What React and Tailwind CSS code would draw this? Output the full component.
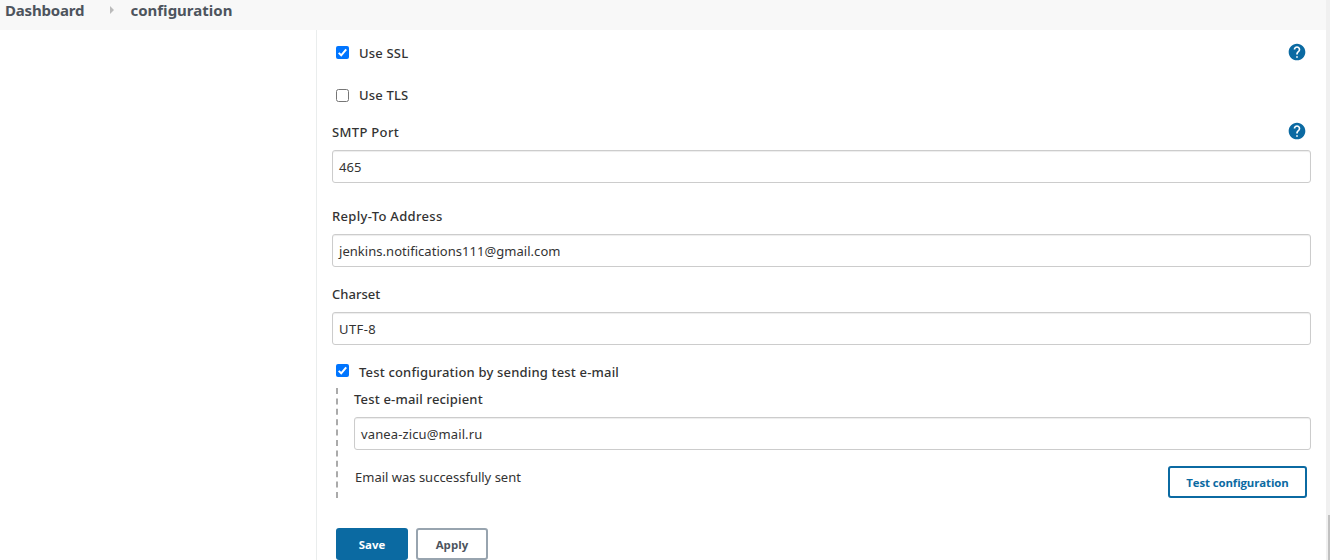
import React from "react";

const label = "text-[13px] leading-5 font-medium text-[#333] whitespace-nowrap tracking-[0.18px]";

function Check({ checked }) {
  return (
    <span
      role="checkbox"
      aria-checked={checked}
      className={
        checked
          ? "block size-[13px] shrink-0 rounded-[2px] bg-[#0075ff]"
          : "block size-[13px] shrink-0 rounded-[2.5px] border border-[#767676] bg-white"
      }
    >
      {checked && (
        <svg viewBox="0 0 13 13" className="block size-[13px]">
          <path d="M2.7 6.9 L5.2 9.3 L10.2 3.3" fill="none" stroke="#fff" strokeWidth="2" />
        </svg>
      )}
    </span>
  );
}

function Help() {
  return (
    <svg viewBox="0 0 24 24" className="block size-5 shrink-0">
      <path
        fill="#0b6aa2"
        d="M12 2C6.48 2 2 6.48 2 12s4.48 10 10 10 10-4.48 10-10S17.52 2 12 2zm1 17h-2v-2h2v2zm2.07-7.75l-.9.92C13.45 12.9 13 13.5 13 15h-2v-.5c0-1.1.45-2.1 1.17-2.83l1.24-1.26c.37-.36.59-.86.59-1.41 0-1.1-.9-2-2-2s-2 .9-2 2H8c0-2.21 1.79-4 4-4s4 1.79 4 4c0 .88-.36 1.68-.93 2.25z"
      />
    </svg>
  );
}

function Field({ children }) {
  return (
    <div className="flex h-[33px] items-center rounded-[3px] border border-[#ccc] bg-white px-1.5 pt-px text-[13px] leading-5 tracking-[0.04px] text-[#333] shadow-[inset_0_1px_1px_rgba(0,0,0,0.075)]">
      {children}
    </div>
  );
}

export default function App() {
  return (
    <div className="flex h-[560px] w-[1330px] overflow-hidden bg-white font-['Noto_Sans','Open_Sans',sans-serif]">
      <div className="flex w-[1326px] flex-col">
        <header className="flex h-[30px] shrink-0 items-start bg-[#f8f8f8] pl-[5px] text-[15px] leading-5 font-bold text-[#4d545d]">
          <span className="w-[105px] tracking-[-0.2px]">Dashboard</span>
          <svg viewBox="0 0 4 8" className="mt-[6px] mr-[16.5px] block h-2 w-1">
            <path d="M0 0 L4 4 L0 8Z" fill="#bbb" />
          </svg>
          <span>configuration</span>
        </header>
        <div className="flex flex-1">
          <aside className="w-[317px] shrink-0 border-r border-[#eaeded]" />
          <main className="flex w-[994px] shrink-0 flex-col pl-[15px]">
            <div className="flex h-11 items-center gap-2.5 pr-1 pl-1">
              <Check checked />
              <span className={label + " flex-1 pt-0.5"}>Use SSL</span>
              <Help />
            </div>
            <div className="flex h-[42px] items-center gap-2.5 pl-1">
              <Check />
              <span className={label}>Use TLS</span>
            </div>
            <div className="flex h-[34px] items-start justify-between pt-[5px] pr-1">
              <span className={label + " pt-px"}><span className="tracking-[0.33px]">SMTP Port</span></span>
              <Help />
            </div>
            <Field><span>465</span></Field>
            <div className="h-[51px] pt-[23px]">
              <div className={label}><span className="tracking-[0.32px]">Reply-To Address</span></div>
            </div>
            <Field><span>jenkins.notifications111@gmail.com</span></Field>
            <div className="h-[45px] pt-[17px]">
              <div className={label}><span className="tracking-[0.02px]">Charset</span></div>
            </div>
            <Field><span className="tracking-[0.4px]">UTF-8</span></Field>
            <div className="flex h-[43px] items-start gap-2.5 pt-[17px] pl-1">
              <div className="pt-[2px]"><Check checked /></div>
              <span className={label}>Test configuration by sending test e-mail</span>
            </div>
            <div className="ml-1 h-[110px] border-l-2 border-dashed border-[#aaa] pl-4">
              <div className="h-[29px] pt-px">
                <div className={label}>Test e-mail recipient</div>
              </div>
              <Field><span className="tracking-[0.12px]">vanea-zicu@mail.ru</span></Field>
              <div className="flex justify-between pt-4 pr-1 pl-px">
                <span className="pt-px text-[13px] leading-5 text-[#333]">Email was successfully sent</span>
                <button className="h-8 w-[139px] rounded-[3px] border-2 border-[#0b6aa2] bg-white pt-0.5 font-['Open_Sans','Noto_Sans',sans-serif] text-[11.4px] font-bold tracking-[-0.1px] text-[#0b6aa2]">
                  <span>Test configuration</span>
                </button>
              </div>
            </div>
            <div className="mt-[30px] flex gap-2 pl-1 font-['Open_Sans','Noto_Sans',sans-serif] text-[11.4px] font-bold">
              <button className="h-8 w-[72px] rounded-[3px] bg-[#0b6aa2] pt-0.5 text-white"><span>Save</span></button>
              <button className="h-8 w-[72px] rounded-[3px] border-2 border-[#98a4af] bg-white pt-0.5 text-[#4d545d]"><span className="tracking-[0.1px]">Apply</span></button>
            </div>
          </main>
        </div>
      </div>
      <div className="w-1 bg-[#f0f0f0] pt-[515px] pl-0.5">
        <div className="h-[45px] bg-[#c1c1c1]" />
      </div>
    </div>
  );
}
